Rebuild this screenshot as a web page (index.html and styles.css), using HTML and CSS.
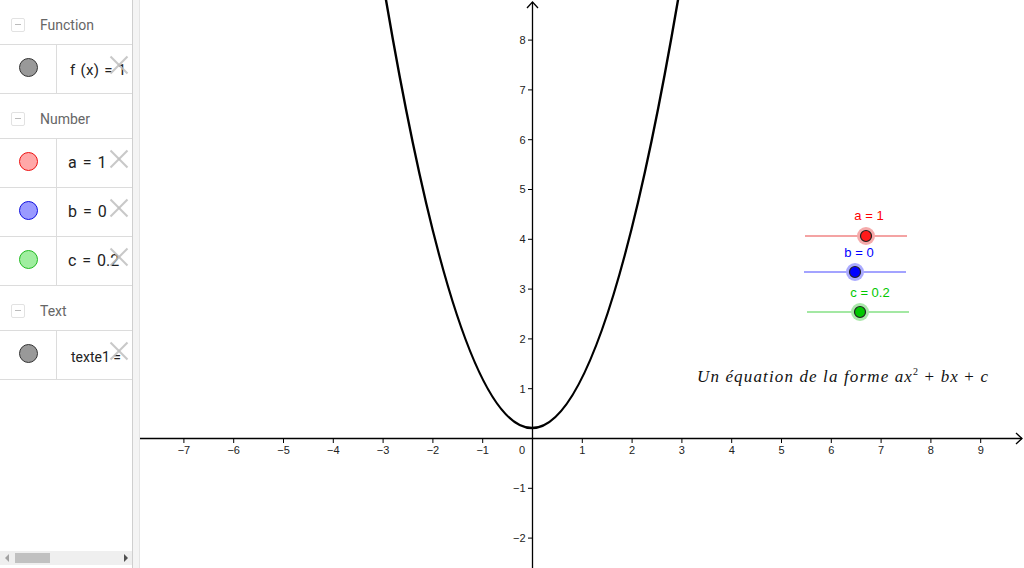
FILE: index.html
```html
<!DOCTYPE html>
<html>
<head>
<meta charset="utf-8">
<link rel="stylesheet" href="styles.css">
</head>
<body>
<div class="app">
  <aside class="panel">
    <div class="list">
      <div class="group">
        <span class="collapse"></span><span class="gname">Function</span>
      </div>
      <div class="item">
        <div class="mark"><span class="dot dot-gray"></span></div>
        <div class="expr"><span class="txt txt-fn">f (x) = 1</span><span class="del"></span></div>
      </div>
      <div class="group">
        <span class="collapse"></span><span class="gname">Number</span>
      </div>
      <div class="item">
        <div class="mark"><span class="dot dot-red"></span></div>
        <div class="expr"><span class="txt">a = 1</span><span class="del"></span></div>
      </div>
      <div class="item">
        <div class="mark"><span class="dot dot-blue"></span></div>
        <div class="expr"><span class="txt">b = 0</span><span class="del"></span></div>
      </div>
      <div class="item">
        <div class="mark"><span class="dot dot-green"></span></div>
        <div class="expr"><span class="txt">c = 0.2</span><span class="del"></span></div>
      </div>
      <div class="group">
        <span class="collapse"></span><span class="gname">Text</span>
      </div>
      <div class="item">
        <div class="mark"><span class="dot dot-gray"></span></div>
        <div class="expr"><span class="txt txt-text">texte1 =</span><span class="del"></span></div>
      </div>
    </div>
    <div class="hscroll">
      <span class="arr arr-left"></span>
      <span class="thumb"></span>
      <span class="arr arr-right"></span>
    </div>
  </aside>
  <div class="divider"></div>
  <main class="graphics">
    <svg class="plot" viewBox="140 0 884 568" width="884" height="568" xmlns="http://www.w3.org/2000/svg">
      <g class="axes" stroke="#000" stroke-width="1.3" fill="none">
        <line x1="140" y1="438.5" x2="1022" y2="438.5"/>
        <polyline points="1016,433 1022,438.5 1016,444"/>
        <line x1="532.5" y1="2" x2="532.5" y2="568"/>
        <polyline points="527,8 532.5,2 538,8"/>
      </g>
      <g class="ticks" stroke="#000" stroke-width="1">
        <line x1="183.9" y1="438" x2="183.9" y2="443"/>
        <line x1="233.7" y1="438" x2="233.7" y2="443"/>
        <line x1="283.5" y1="438" x2="283.5" y2="443"/>
        <line x1="333.3" y1="438" x2="333.3" y2="443"/>
        <line x1="383.1" y1="438" x2="383.1" y2="443"/>
        <line x1="432.9" y1="438" x2="432.9" y2="443"/>
        <line x1="482.7" y1="438" x2="482.7" y2="443"/>
        <line x1="582.3" y1="438" x2="582.3" y2="443"/>
        <line x1="632.1" y1="438" x2="632.1" y2="443"/>
        <line x1="681.9" y1="438" x2="681.9" y2="443"/>
        <line x1="731.7" y1="438" x2="731.7" y2="443"/>
        <line x1="781.5" y1="438" x2="781.5" y2="443"/>
        <line x1="831.3" y1="438" x2="831.3" y2="443"/>
        <line x1="881.1" y1="438" x2="881.1" y2="443"/>
        <line x1="930.9" y1="438" x2="930.9" y2="443"/>
        <line x1="980.7" y1="438" x2="980.7" y2="443"/>
        <line x1="528" y1="40.1" x2="533" y2="40.1"/>
        <line x1="528" y1="89.9" x2="533" y2="89.9"/>
        <line x1="528" y1="139.7" x2="533" y2="139.7"/>
        <line x1="528" y1="189.5" x2="533" y2="189.5"/>
        <line x1="528" y1="239.3" x2="533" y2="239.3"/>
        <line x1="528" y1="289.1" x2="533" y2="289.1"/>
        <line x1="528" y1="338.9" x2="533" y2="338.9"/>
        <line x1="528" y1="388.7" x2="533" y2="388.7"/>
        <line x1="528" y1="488.3" x2="533" y2="488.3"/>
        <line x1="528" y1="538.1" x2="533" y2="538.1"/>
      </g>
      <g class="xlabels" text-anchor="middle">
        <text x="183.9" y="454">−7</text>
        <text x="233.7" y="454">−6</text>
        <text x="283.5" y="454">−5</text>
        <text x="333.3" y="454">−4</text>
        <text x="383.1" y="454">−3</text>
        <text x="432.9" y="454">−2</text>
        <text x="482.7" y="454">−1</text>
        <text x="522" y="454">0</text>
        <text x="582.3" y="454">1</text>
        <text x="632.1" y="454">2</text>
        <text x="681.9" y="454">3</text>
        <text x="731.7" y="454">4</text>
        <text x="781.5" y="454">5</text>
        <text x="831.3" y="454">6</text>
        <text x="881.1" y="454">7</text>
        <text x="930.9" y="454">8</text>
        <text x="980.7" y="454">9</text>
      </g>
      <g class="ylabels" text-anchor="end">
        <text x="525.5" y="44">8</text>
        <text x="525.5" y="93.8">7</text>
        <text x="525.5" y="143.6">6</text>
        <text x="525.5" y="193.4">5</text>
        <text x="525.5" y="243.2">4</text>
        <text x="525.5" y="293">3</text>
        <text x="525.5" y="342.8">2</text>
        <text x="525.5" y="392.6">1</text>
        <text x="525.5" y="492.2">−1</text>
        <text x="525.5" y="542">−2</text>
      </g>
      <path class="curve" d="M385.1,-5.3 Q532,861.4 678.9,-5.3" fill="none" stroke="#000" stroke-width="2.4"/>

      <g class="slider">
        <line x1="805" y1="236" x2="907" y2="236" stroke="#f4a3a3" stroke-width="2"/>
        <circle cx="866" cy="236" r="9" fill="#f5aaaa"/>
        <circle cx="866" cy="236" r="5.5" fill="#ff1a1a" stroke="#222" stroke-width="1.2"/>
        <text class="slabel" x="869" y="220" fill="#ff0000" text-anchor="middle">a = 1</text>
      </g>
      <g class="slider">
        <line x1="804" y1="272" x2="906" y2="272" stroke="#a3a3ff" stroke-width="2"/>
        <circle cx="855" cy="272" r="9" fill="#aaaaff"/>
        <circle cx="855" cy="272" r="5.5" fill="#0000ff" stroke="#222" stroke-width="1.2"/>
        <text class="slabel" x="859" y="257" fill="#0000ff" text-anchor="middle">b = 0</text>
      </g>
      <g class="slider">
        <line x1="807" y1="312" x2="909" y2="312" stroke="#a3e8a3" stroke-width="2"/>
        <circle cx="860" cy="312" r="9" fill="#aae8aa"/>
        <circle cx="860" cy="312" r="5.5" fill="#00c800" stroke="#222" stroke-width="1.2"/>
        <text class="slabel" x="870" y="297" fill="#00c800" text-anchor="middle">c = 0.2</text>
      </g>

      <text class="eq" x="697" y="382" textLength="291" lengthAdjust="spacing"><tspan class="it">Un équation de la forme ax</tspan><tspan class="sup" dy="-7">2</tspan><tspan dy="7"> + </tspan><tspan class="it">bx</tspan><tspan> + </tspan><tspan class="it">c</tspan></text>
    </svg>
  </main>
</div>
</body>
</html>
```
FILE: styles.css
```css
html, body {
  margin: 0;
  padding: 0;
  background: #fff;
}
.app {
  display: flex;
  width: 1024px;
  height: 568px;
  overflow: hidden;
  font-family: Roboto, "Liberation Sans", sans-serif;
}
.panel {
  width: 132px;
  flex: 0 0 132px;
  display: flex;
  flex-direction: column;
  background: #fff;
  position: relative;
}
.list {
  flex: 1;
  overflow: hidden;
}
.group {
  height: 45px;
  padding-top: 5px;
  box-sizing: border-box;
  display: flex;
  align-items: center;
  border-bottom: 1px solid #dcdcdc;
}
.collapse {
  width: 12px;
  height: 12px;
  margin-left: 11px;
  border: 1px solid #e2e2e2;
  border-radius: 2px;
  position: relative;
}
.collapse::after {
  content: "";
  position: absolute;
  left: 3px;
  right: 3px;
  top: 5.5px;
  height: 1px;
  background: #bbb;
}
.gname {
  margin-left: 15px;
  font-size: 14px;
  color: #666;
}
.item {
  height: 48px;
  display: flex;
  border-bottom: 1px solid #dcdcdc;
}
.mark {
  width: 56px;
  flex: 0 0 56px;
  border-right: 1px solid #dcdcdc;
  display: flex;
  align-items: center;
  justify-content: center;
}
.dot {
  width: 17px;
  height: 17px;
  border-radius: 50%;
  border: 1px solid #333;
  margin-top: -3px;
}
.dot-gray { background: #999; border-color: #333; }
.dot-red { background: #ffa8a8; border-color: #ee1111; }
.dot-blue { background: #9a9aff; border-color: #1010e0; }
.dot-green { background: #a0eea0; border-color: #22bb22; }
.expr {
  flex: 1;
  position: relative;
  overflow: hidden;
  display: flex;
  align-items: center;
}
.txt {
  white-space: nowrap;
  margin-left: 11px;
  font-size: 16px;
  word-spacing: 2px;
  color: #222;
  margin-top: -1px;
}
.txt-fn {
  margin-left: 13px;
  font-size: 15px;
  word-spacing: 1px;
  letter-spacing: 0.3px;
  margin-top: 2px;
}
.txt-text {
  margin-left: 14px;
  font-size: 14px;
  word-spacing: 0;
  margin-top: 4px;
}
.del {
  position: absolute;
  left: 53px;
  top: 11px;
  width: 18px;
  height: 18px;
}
.del::before,
.del::after {
  content: "";
  position: absolute;
  left: -3px;
  top: 8px;
  width: 24px;
  height: 2px;
  background: rgba(190, 190, 190, 0.85);
  transform: rotate(45deg);
}
.del::after {
  transform: rotate(-45deg);
}
.hscroll {
  height: 14px;
  margin-bottom: 3px;
  background: #efefef;
  position: relative;
}
.thumb {
  position: absolute;
  left: 15px;
  top: 2px;
  width: 35px;
  height: 10px;
  background: #c1c1c1;
}
.arr {
  position: absolute;
  top: 3px;
  width: 0;
  height: 0;
  border-top: 4px solid transparent;
  border-bottom: 4px solid transparent;
}
.arr-left {
  left: 5px;
  border-right: 4px solid #a3a3a3;
}
.arr-right {
  left: 124px;
  border-left: 4px solid #505050;
}
.divider {
  width: 8px;
  flex: 0 0 8px;
  background: #f4f4f4;
  border-left: 1px solid #cfcfcf;
  border-right: 1px solid #e4e4e4;
  box-sizing: border-box;
}
.graphics {
  flex: 1;
  height: 568px;
  overflow: hidden;
}
.plot {
  display: block;
}
.xlabels text,
.ylabels text {
  font-family: "Liberation Sans", sans-serif;
  font-size: 11px;
  fill: #222;
}
.slabel {
  font-family: "Liberation Sans", sans-serif;
  font-size: 13px;
}
.eq {
  font-family: "Liberation Serif", serif;
  font-size: 17px;
  fill: #111;
}
.eq .it {
  font-style: italic;
}
.eq .sup {
  font-size: 10px;
}
```
